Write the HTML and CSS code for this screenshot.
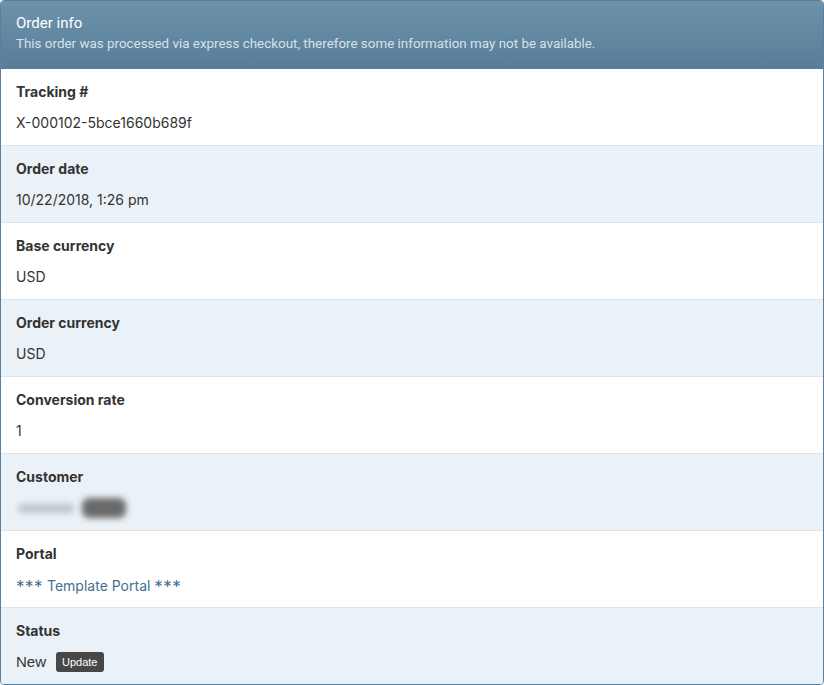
FILE: index.html
```html
<!DOCTYPE html>
<html lang="en">
<head>
  <meta charset="UTF-8" />
  <title>Order info</title>
  <link rel="stylesheet" href="styles.css">
</head>
<body>

<div class="panel">
  <div class="panel-head">
    <h3>Order info</h3>
    <p>This order was processed via express checkout, therefore some information may not be available.</p>
  </div>

  <div class="row">
    <div class="label">Tracking #</div>
    <div class="value">X-000102-5bce1660b689f</div>
  </div>
  <div class="row alt">
    <div class="label">Order date</div>
    <div class="value">10/22/2018, 1:26 pm</div>
  </div>
  <div class="row">
    <div class="label">Base currency</div>
    <div class="value">USD</div>
  </div>
  <div class="row alt">
    <div class="label">Order currency</div>
    <div class="value">USD</div>
  </div>
  <div class="row">
    <div class="label">Conversion rate</div>
    <div class="value">1</div>
  </div>
  <div class="row alt">
    <div class="label">Customer</div>
    <div class="value blurred">
      <span class="blur-name"></span>
      <span class="blur-tag"></span>
    </div>
  </div>
  <div class="row">
    <div class="label">Portal</div>
    <div class="value"><a href="#"><span class="stars">***</span> Template Portal <span class="stars">***</span></a></div>
  </div>
  <div class="row alt last">
    <div class="label">Status</div>
    <div class="value status">
      <span>New</span>
      <button class="btn-update">Update</button>
    </div>
  </div>
</div>

</body>
</html>
```

FILE: styles.css
```css
body {
  margin: 0;
  font-family: 'Inter', sans-serif;
  color: #333;
  background-color: #fff;
}
.panel {
  width: 824px;
  height: 685px;
  box-sizing: border-box;
  border: 1px solid #5c809b;
  border-radius: 4px;
  overflow: hidden;
}
.panel-head {
  height: 68px;
  box-sizing: border-box;
  padding: 12px 15px 0;
  background: linear-gradient(#6d93ac, #587d98);
  color: #fff;
  font-family: 'Roboto', sans-serif;
}
.panel-head h3 {
  margin: 0;
  font-size: 15px;
  font-weight: normal;
  line-height: 20px;
}
.panel-head p {
  margin: 2px 0 0;
  font-size: 13.4px;
  line-height: 18px;
  color: #d6e2ea;
}
.row {
  height: 77px;
  box-sizing: border-box;
  padding: 13px 15px 11px;
  border-bottom: 1px solid #dbe4ec;
  background-color: #fff;
}
.row.alt {
  background-color: #eaf1f7;
}
.row.last {
  border-bottom: none;
}
.label {
  font-size: 14px;
  font-weight: bold;
  line-height: 20px;
}
.value {
  margin-top: 11px;
  font-size: 14px;
  line-height: 20px;
  display: flex;
  align-items: center;
}
.value a {
  color: #44708f;
  text-decoration: none;
}
.stars {
  font-size: 17px;
  letter-spacing: 0.5px;
  position: relative;
  top: 2px;
}
.blur-name {
  width: 56px;
  height: 9px;
  margin-left: 2px;
  border-radius: 5px;
  background-color: #bcc3c9;
  filter: blur(3px);
}
.blur-tag {
  width: 44px;
  height: 20px;
  margin-left: 8px;
  border-radius: 7px;
  background-color: #6a6a6a;
  filter: blur(3px);
}
.status span {
  font-family: 'Liberation Sans', sans-serif;
  font-size: 15px;
}
.btn-update {
  margin-left: 10px;
  padding: 0 6px;
  height: 20px;
  font-family: 'Liberation Sans', sans-serif;
  font-size: 11px;
  color: #fff;
  background-color: #474747;
  border: none;
  border-radius: 3px;
}
```
